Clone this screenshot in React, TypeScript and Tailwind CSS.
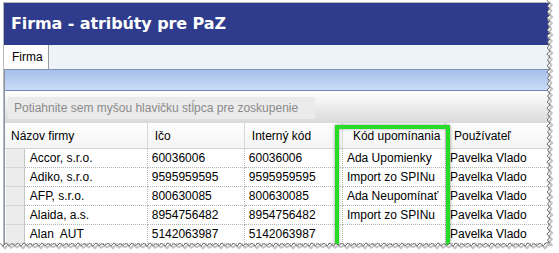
import React from "react";

const rows = [
  ["Accor, s.r.o.", "60036006", "60036006", "Ada Upomienky", "Pavelka Vlado"],
  ["Adiko, s.r.o.", "9595959595", "9595959595", "Import zo SPINu", "Pavelka Vlado"],
  ["AFP, s.r.o.", "800630085", "800630085", "Ada Neupomínať", "Pavelka Vlado"],
  ["Alaida, a.s.", "8954756482", "8954756482", "Import zo SPINu", "Pavelka Vlado"],
  ["Alan  AUT", "5142063987", "5142063987", "", "Pavelka Vlado"],
];

// jagged "torn paper" edge along right and bottom
const tornEdge = () => {
  const pts: string[] = [];
  for (let y = 0, i = 0; y <= 245; y += 3, i++) {
    const x = 548 + (i % 2 ? 1.4 : -1.2) + ((i * 7) % 3) * 0.4;
    pts.push(`${x.toFixed(1)},${y}`);
  }
  for (let x = 546, i = 0; x >= 0; x -= 3, i++) {
    const y = 244 + (i % 2 ? 1.4 : -1.2) + ((i * 5) % 3) * 0.4;
    pts.push(`${x},${y.toFixed(1)}`);
  }
  return pts;
};

const App = () => {
  const edge = tornEdge();
  const line = "M" + edge.join(" L");
  const outside = `${line} L0,253 L559,253 L559,0 Z`;

  return (
    <div
      className="relative w-[559px] h-[253px] bg-white overflow-hidden"
      style={{ fontFamily: "'Liberation Sans', Arial, sans-serif" }}
    >
      <div className="ml-[3px] mt-[2px] w-[552px] h-[250px] flex flex-col border-l border-t border-[#b8b8b8]">
        {/* Title */}
        <div className="h-[42px] bg-[#2f3b8c] flex items-center pl-[7px]">
          <span
            className="text-white font-bold text-[16px] tracking-[-0.1px]"
            style={{ fontFamily: "'DejaVu Sans', Verdana, sans-serif" }}
          >
            Firma - atribúty pre PaZ
          </span>
        </div>

        {/* Tabs */}
        <div className="h-[24px] bg-[#eef2f9] flex items-end">
          <div className="w-[45px] h-[24px] bg-white border-r border-[#9a9a9a] flex items-center pl-[8px] text-[12px] text-black">
            Firma
          </div>
        </div>

        <div className="flex flex-col border-l border-[#8a96a8]">
          {/* Blue bar */}
          <div className="h-[22px] border-t border-[#8293ad] border-b border-b-[#6f88b8] bg-gradient-to-b from-[#a6c0ec] to-[#cadbf5]" />

          {/* Group-by panel */}
          <div className="h-[32px] bg-gradient-to-b from-white to-[#dadada] pt-[6px] pl-[3px]">
            <div className="w-[307px] h-[22px] bg-[#ebebeb] flex items-center pl-[6px] text-[12px] text-[#8a8a8a] whitespace-nowrap">
              Potiahnite sem myšou hlavičku stĺpca pre zoskupenie
            </div>
          </div>

          {/* Header */}
          <div className="h-[26px] flex bg-gradient-to-b from-white to-[#f4f4f4] border-b border-[#d4d4d4] text-[12px] text-black">
            <div className="w-[144px] flex items-end pb-[3px] pl-[6px] border-r border-[#d8d8d8]">Názov firmy</div>
            <div className="w-[98px] flex items-end pb-[3px] pl-[7px] border-r border-[#d8d8d8]">Ičo</div>
            <div className="w-[99px] flex items-end pb-[3px] pl-[7px] border-r border-[#d8d8d8]">Interný kód</div>
            <div className="w-[104px] flex items-end pb-[3px] pl-[10px] border-r border-[#d8d8d8]">Kód upomínania</div>
            <div className="w-[110px] flex items-end pb-[3px] pl-[8px]">Používateľ</div>
          </div>

          {/* Rows */}
          {rows.map((r, i) => (
            <div key={i} className="h-[19px] flex text-[12px] text-black">
              <div className="w-[20px] bg-[#ececec] border-l border-white border-r border-r-[#c4c4c4] border-b border-b-[#d6d6d6]" />
              <div className="w-[124px] flex items-center pl-[5px] whitespace-pre border-r border-b border-dotted border-[#b4b4b4]">{r[0]}</div>
              <div className="w-[98px] flex items-center pl-[4px] border-r border-b border-dotted border-[#b4b4b4]">{r[1]}</div>
              <div className="w-[99px] flex items-center pl-[4px] border-r border-b border-dotted border-[#b4b4b4]">{r[2]}</div>
              <div className="w-[104px] flex items-center pl-[4px] border-r border-b border-dotted border-[#b4b4b4]">{r[3]}</div>
              <div className="w-[110px] flex items-center pl-[4px] border-b border-dotted border-[#b4b4b4]">{r[4]}</div>
            </div>
          ))}
        </div>
      </div>

      {/* Green highlight around the "Kód upomínania" column */}
      <div className="absolute left-[335px] top-[125px] w-[115px] h-[130px] border-[4px] border-[#27dc27] shadow-[0_0_3px_rgba(0,0,0,0.45),inset_0_0_3px_rgba(0,0,0,0.35)]" />

      {/* Torn edge */}
      <svg className="absolute inset-0" width="559" height="253" viewBox="0 0 559 253">
        <path d={outside} fill="#ffffff" />
        <path d={line} fill="none" stroke="#c4c4c4" strokeWidth="2" transform="translate(2 2)" />
        <path d={line} fill="none" stroke="#6e6e6e" strokeWidth="1" />
      </svg>
    </div>
  );
};

export default App;
